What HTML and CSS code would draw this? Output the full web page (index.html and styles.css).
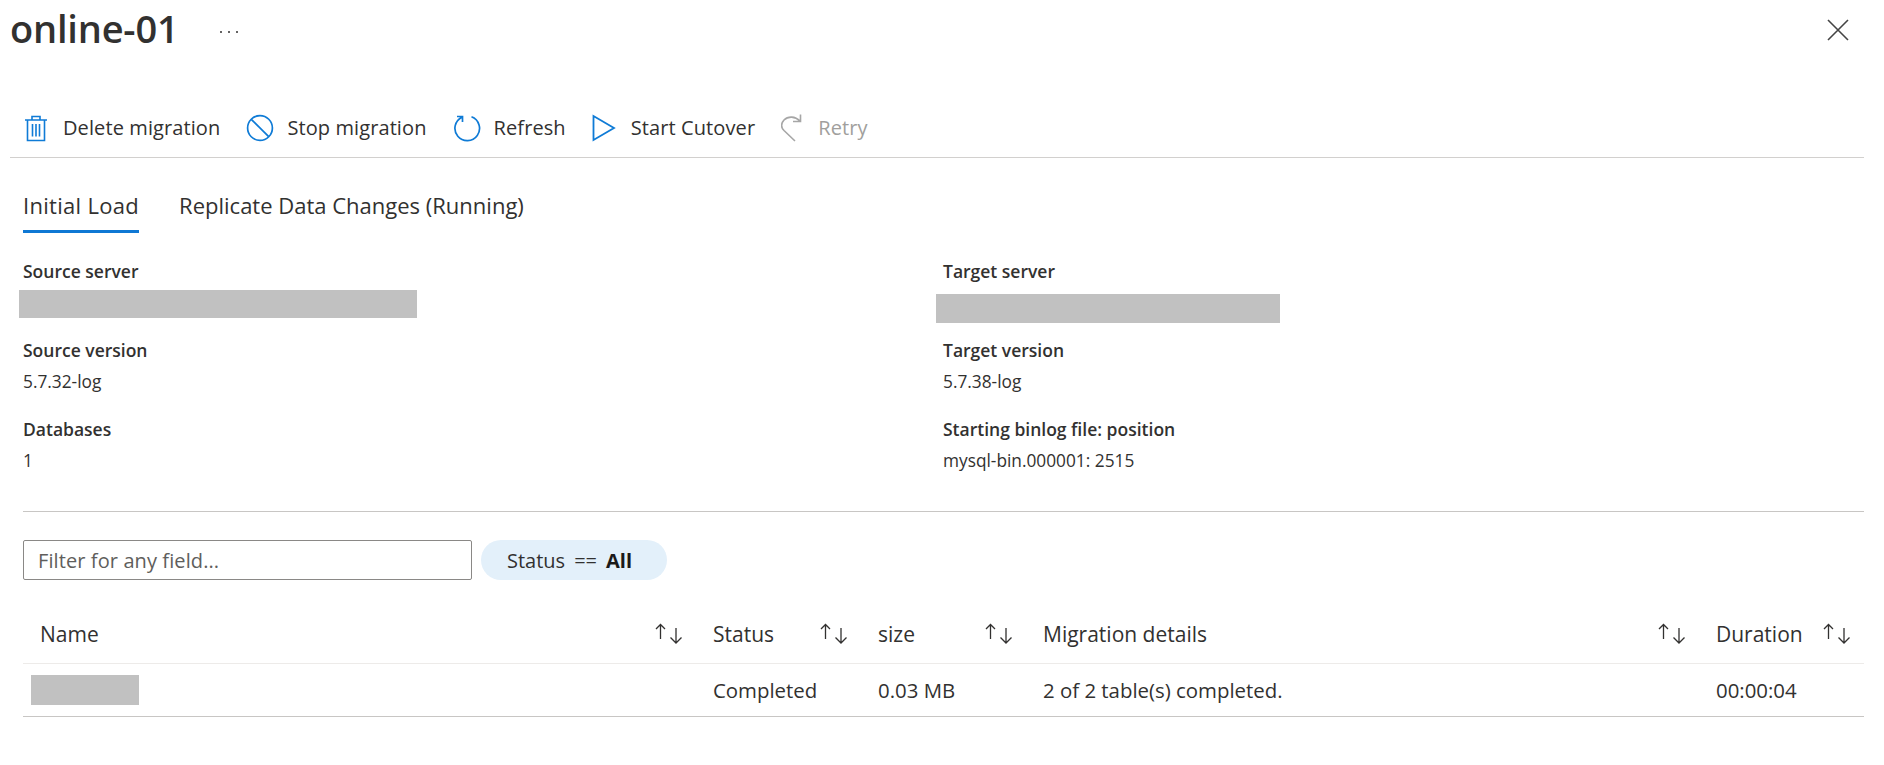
FILE: index.html
```html
<!DOCTYPE html>
<html lang="en">
<head>
    <meta charset="UTF-8">
    <title>online-01</title>
    <link rel="stylesheet" href="styles.css">
</head>
<body>
    <svg class="defs" width="0" height="0">
        <symbol id="sort-icon" viewBox="0 0 28 24"><path d="M5.500 16V1.500M1 6L5.500 1.500L10 6M21 5V20M15.500 14.500L21 20L26.500 14.500"/></symbol>
    </svg>

    <div class="blade">
        <header class="title-bar">
            <h1>online-01</h1>
            <svg class="more" width="20" height="4" viewBox="0 0 20 4" fill="#323130"><circle cx="2" cy="2" r="1"/><circle cx="10" cy="2" r="1"/><circle cx="18" cy="2" r="1"/></svg>
            <svg class="close" width="22" height="22" viewBox="0 0 22 22"><path d="M1 1L21 21M21 1L1 21" stroke="#444" stroke-width="1.6" fill="none"/></svg>
        </header>

        <div class="toolbar">
            <button class="tool">
                <svg width="24" height="28" viewBox="0 0 24 28" fill="none" stroke="#0f7bd6" stroke-width="1.6"><path d="M1 6H23M8 6V2.500H16V6M3.500 6V26.500H20.500V6M8.500 10V22.500M12 10V22.500M15.500 10V22.500"/></svg>
                Delete migration
            </button>
            <button class="tool tool-round">
                <svg width="28" height="28" viewBox="0 0 28 28" fill="none" stroke="#0f7bd6" stroke-width="1.7"><circle cx="14" cy="14" r="12.400"/><path d="M5.300 5.300L22.700 22.700"/></svg>
                Stop migration
            </button>
            <button class="tool tool-round">
                <svg width="28" height="28" viewBox="0 0 28 28" fill="none" stroke="#0f7bd6" stroke-width="1.7"><path d="M18.500 2.800A12.300 12.300 0 1 1 9 3.200M4 2.500H9.500V8"/></svg>
                Refresh
            </button>
            <button class="tool">
                <svg width="24" height="28" viewBox="0 0 24 28" fill="none" stroke="#0f7bd6" stroke-width="1.8"><path d="M1.500 2V26L22 14Z"/></svg>
                Start Cutover
            </button>
            <button class="tool tool-off">
                <svg width="22" height="28" viewBox="0 0 22 28" fill="none" stroke="#a6a6a6" stroke-width="1.6"><path d="M19.500 0.500V7.500H12M19 7C14 2 7 2 3 6C0 9.500 0 13.500 3 16.500L14 27"/></svg>
                Retry
            </button>
        </div>

        <nav class="tabs">
            <a class="tab tab-active">Initial Load</a>
            <a class="tab">Replicate Data Changes (Running)</a>
        </nav>

        <section class="props">
            <div class="prop">
                <div class="prop-label">Source server</div>
                <div class="redact redact-source"></div>
            </div>
            <div class="prop">
                <div class="prop-label">Target server</div>
                <div class="redact redact-target"></div>
            </div>
            <div class="prop">
                <div class="prop-label">Source version</div>
                <div class="prop-value">5.7.32-log</div>
            </div>
            <div class="prop">
                <div class="prop-label">Target version</div>
                <div class="prop-value">5.7.38-log</div>
            </div>
            <div class="prop">
                <div class="prop-label">Databases</div>
                <div class="prop-value">1</div>
            </div>
            <div class="prop">
                <div class="prop-label">Starting binlog file: position</div>
                <div class="prop-value">mysql-bin.000001: 2515</div>
            </div>
        </section>

        <div class="filters">
            <input class="filter-input" type="text" placeholder="Filter for any field...">
            <span class="chip">Status <span class="chip-op">==</span> <b>All</b></span>
        </div>

        <div class="grid grid-head">
            <div class="cell cell-head">Name <svg class="sort"><use href="#sort-icon"/></svg></div>
            <div class="cell cell-head">Status <svg class="sort"><use href="#sort-icon"/></svg></div>
            <div class="cell cell-head">size <svg class="sort"><use href="#sort-icon"/></svg></div>
            <div class="cell cell-head">Migration details <svg class="sort"><use href="#sort-icon"/></svg></div>
            <div class="cell cell-head cell-last">Duration <svg class="sort"><use href="#sort-icon"/></svg></div>
        </div>
        <div class="grid grid-row">
            <div class="cell cell-name"><div class="redact redact-name"></div></div>
            <div class="cell">Completed</div>
            <div class="cell">0.03 MB</div>
            <div class="cell">2 of 2 table(s) completed.</div>
            <div class="cell cell-last">00:00:04</div>
        </div>
    </div>
</body>
</html>
```

FILE: styles.css
```css
body {
    font-family: "Open Sans", "Noto Sans", sans-serif;
    margin: 0;
    background: #fff;
    color: #323130;
}

.defs {
    display: block;
    height: 0;
}

.blade {
    padding: 0 20px 0 10px;
}

.title-bar {
    display: flex;
    align-items: center;
    height: 60px;
    box-sizing: border-box;
    padding-bottom: 4px;
}

.title-bar h1 {
    margin: 0;
    font-size: 38px;
    font-weight: 600;
    letter-spacing: -0.2px;
}

.more {
    margin: 8px 0 0 41px;
}

.close {
    margin: 4px 15px 0 auto;
}

.toolbar {
    display: flex;
    align-items: center;
    gap: 26px;
    height: 98px;
    padding: 38px 0 0 14px;
    box-sizing: border-box;
    border-bottom: 1px solid #d2d0ce;
}

.tool {
    display: flex;
    align-items: center;
    gap: 15px;
    padding: 0;
    border: none;
    background: none;
    color: #323130;
    font-family: inherit;
    font-size: 20px;
    letter-spacing: 0.1px;
}

.tool-round {
    gap: 13px;
}

.tool-off {
    color: #a19f9d;
}

.tabs {
    display: flex;
    gap: 40px;
    padding-left: 13px;
    height: 75px;
    align-items: flex-end;
}

.tab {
    font-size: 22px;
    padding-bottom: 10px;
    border-bottom: 3px solid transparent;
}

.tab-active {
    border-bottom-color: #0f78d4;
    font-weight: 500;
    letter-spacing: 0.3px;
}

.props {
    display: grid;
    grid-template-columns: 920px 1fr;
    grid-auto-rows: 79px;
    margin-left: 13px;
    padding-top: 26px;
    height: 279px;
    box-sizing: border-box;
    border-bottom: 1px solid #c8c6c4;
}

.prop-label {
    font-size: 17.500px;
    font-weight: 600;
    line-height: 24px;
}

.prop-value {
    font-size: 17.300px;
    line-height: 24px;
    margin-top: 8px;
}

.redact {
    background: #c1c1c1;
}

.redact-source {
    width: 398px;
    height: 28px;
    margin: 7px 0 0 -4px;
}

.redact-target {
    width: 344px;
    height: 29px;
    margin: 11px 0 0 -7px;
}

.redact-name {
    width: 108px;
    height: 30px;
    margin: 0 0 1px 8px;
}

.filters {
    display: flex;
    align-items: center;
    gap: 9px;
    padding: 28px 0 0 13px;
}

.filter-input {
    width: 449px;
    height: 40px;
    box-sizing: border-box;
    border: 1px solid #8a8886;
    border-radius: 2px;
    padding: 0 14px;
    font-family: inherit;
    font-size: 20px;
    letter-spacing: 0.1px;
    color: #323130;
}

.filter-input::placeholder {
    color: #605e5c;
    opacity: 1;
}

.chip {
    display: flex;
    align-items: center;
    gap: 9px;
    height: 40px;
    padding: 0 35px 0 26px;
    border-radius: 20px;
    background: #e3f0fa;
    font-size: 20px;
}

.chip b {
    color: #1b1a19;
}

.grid {
    display: grid;
    grid-template-columns: 690px 165px 165px 673px 148px;
    margin-left: 13px;
    width: 1841px;
}

.grid-head {
    height: 59px;
    margin-top: 24px;
    border-bottom: 1px solid #edebe9;
}

.grid-row {
    height: 52px;
    border-bottom: 1px solid #c8c6c4;
}

.cell {
    display: flex;
    align-items: center;
    justify-content: space-between;
    padding-right: 30px;
    font-size: 20.400px;
    white-space: nowrap;
}

.cell-head {
    font-size: 21px;
    font-weight: 500;
}

.grid-head .cell:first-child {
    padding-left: 17px;
}

.cell-last {
    padding-right: 13px;
}

.sort {
    width: 28px;
    height: 24px;
    margin-top: 3px;
    fill: none;
    stroke: #323130;
    stroke-width: 1.300;
}
```
